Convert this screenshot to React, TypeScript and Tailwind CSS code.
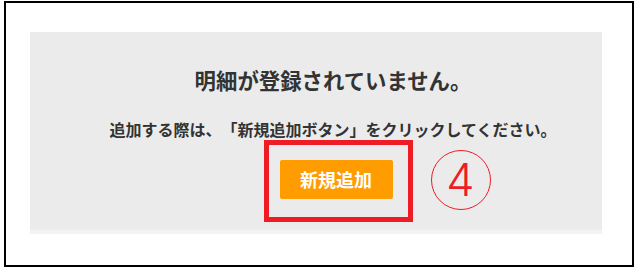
import React from 'react';

const jp = { fontFamily: '"Noto Sans CJK JP", "Noto Sans", sans-serif' };

export default function App() {
  return (
    <div className="bg-white w-[639px] h-[273px] pt-[1px] pl-[4px] [text-spacing-trim:space-all]" style={jp}>
      <div className="w-[630px] h-[266px] border-2 border-black pl-[24px] pt-[29px]">
        {/* Empty state panel */}
        <div className="w-[572px] h-[202px] bg-[#ebebeb] border-b-4 border-[#f3f3f3] pl-[34px] flex flex-col items-center text-[#333333] font-bold">
          <h2 className="mt-[33px] text-[21.4px] leading-[30px]">明細が登録されていません。</h2>
          <p className="mt-[22px] text-[16px] leading-[24px]">
            追加する際は、「新規追加ボタン」をクリックしてください。
          </p>
          <div className="relative mt-[19px] ml-[6px]">
            <button className="w-[113px] h-[39px] rounded-[2px] bg-[#ff9c00] text-white text-[18px] leading-[39px] font-bold">
              新規追加
            </button>
            {/* Annotation overlay */}
            <div className="absolute left-[-16px] top-[-20px] w-[149px] h-[82px] border-[5px] border-[#ee1c25]" />
            <div className="absolute left-[151px] top-[-10px] w-[60px] h-[60px] rounded-full border-[1.5px] border-[#ee1c25] flex items-center justify-center">
              <span
                className="text-[#ee1c25] text-[45px] leading-none font-light pb-[1px]"
                style={{ fontFamily: 'Inter, "Liberation Sans", sans-serif' }}
              >
                4
              </span>
            </div>
          </div>
        </div>
      </div>
    </div>
  );
}
